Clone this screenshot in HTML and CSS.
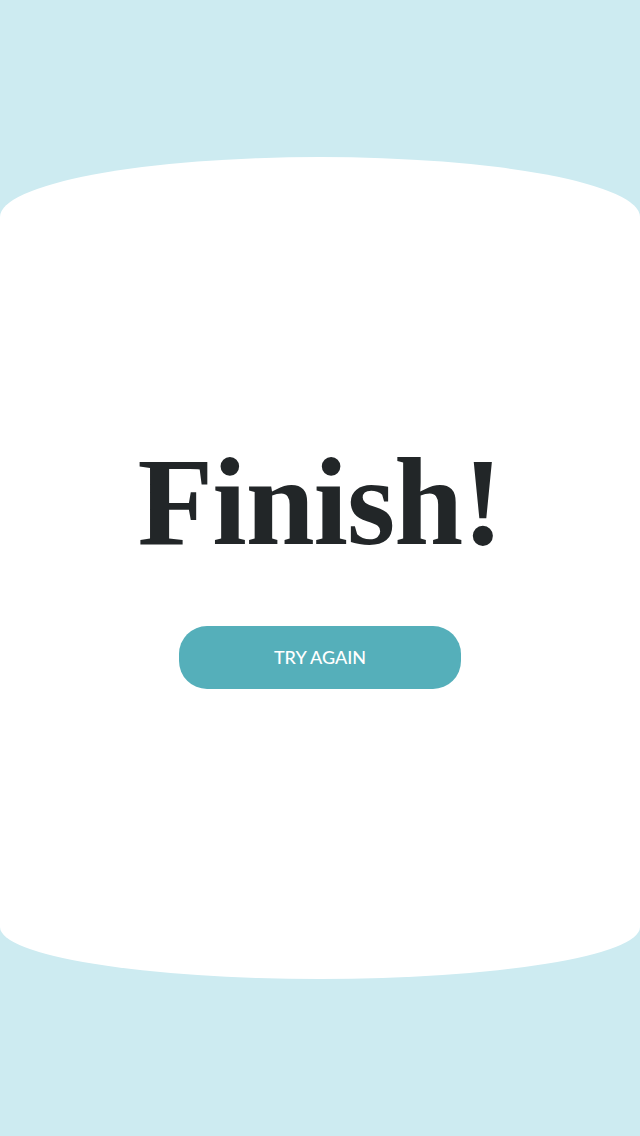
FILE: index.html
```html
<!DOCTYPE html>
<html lang="en">
<head>
<meta charset="utf-8">
<title>Finish</title>
<link rel="stylesheet" href="styles.css">
</head>
<body>
<main class="screen">
  <section class="card">
    <h1 class="title">Finish!</h1>
    <button class="btn" type="button">TRY AGAIN</button>
  </section>
</main>
</body>
</html>
```

FILE: styles.css
```css
html, body {
  margin: 0;
  padding: 0;
}
body {
  background: #cdebf1;
  width: 640px;
  height: 1136px;
  overflow: hidden;
}
.screen {
  padding-top: 157px;
}
.card {
  background: #ffffff;
  height: 822px;
  box-sizing: border-box;
  border-radius: 320px 320px 320px 320px / 60px 60px 52px 52px;
  display: flex;
  flex-direction: column;
  align-items: center;
  padding-top: 284px;
}
.title {
  margin: 0;
  font-family: "Liberation Serif", "DejaVu Serif", serif;
  font-weight: 700;
  font-size: 124px;
  line-height: 124px;
  color: #222628;
  letter-spacing: -1px;
}
.btn {
  margin-top: 61px;
  width: 282px;
  height: 63px;
  border: 0;
  border-radius: 28px;
  background: #55afba;
  color: #ffffff;
  font-family: Lato, "Open Sans", sans-serif;
  font-size: 18px;
  font-weight: 500;
  padding: 0 0 2px;
  cursor: pointer;
}
```
